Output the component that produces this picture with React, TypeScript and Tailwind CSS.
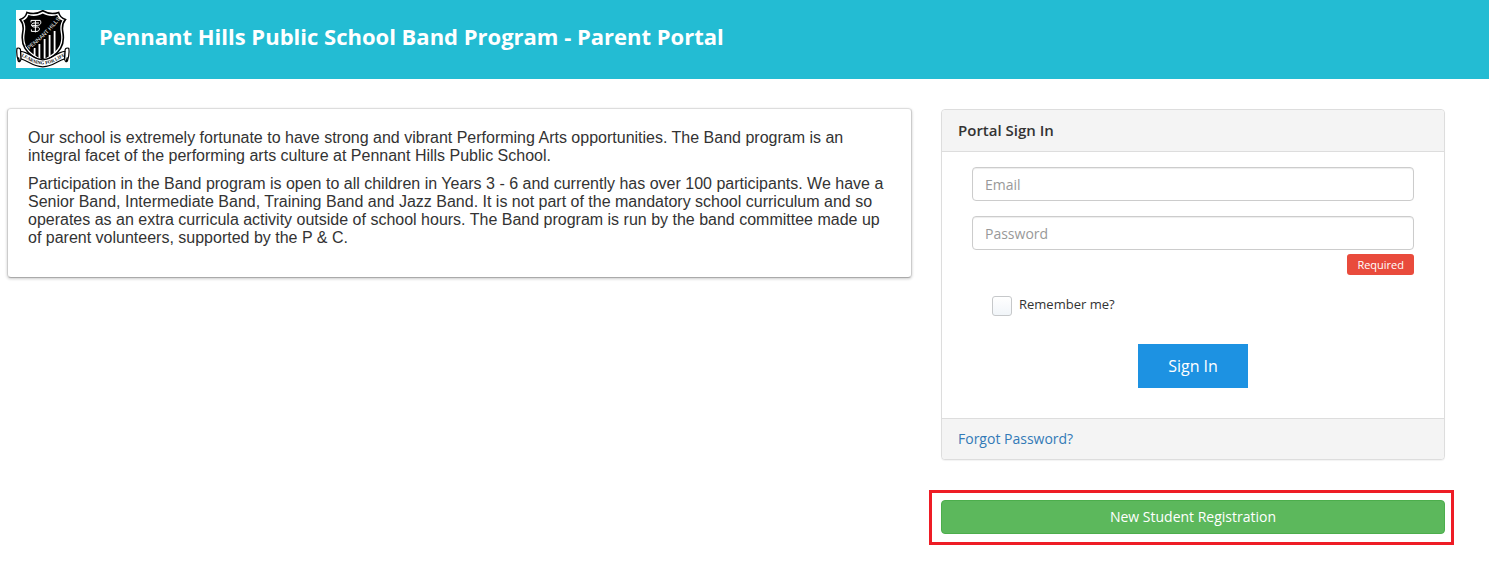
function SchoolCrest() {
  return (
    <svg
      viewBox="0 0 54 58"
      className="h-[58px] w-[54px] shrink-0"
      role="img"
      aria-label="Pennant Hills Public School crest"
    >
      <rect width="54" height="58" fill="#fff" />
      <path
        d="M11 2.4C17 4.6 22 3.6 26.8.8C31.6 3.6 36.6 4.6 42.6 2.4C43.6 6 46 8.4 49.4 9.6C46.4 13 45.8 17 46.9 22.5C48.9 34 45.4 43.5 26.8 52C8.2 43.5 4.7 34 6.7 22.5C7.8 17 7.2 13 4.2 9.6C7.6 8.4 10 6 11 2.4Z"
        fill="#fff"
        stroke="#000"
        strokeWidth="1.6"
      />
      <path
        d="M12.4 5C18 6.8 22.4 5.8 26.8 3.4C31.2 5.8 35.6 6.8 41.2 5C42.2 7.8 44 9.6 46.4 10.6C44.2 14 43.8 18 44.8 23C46.6 33.4 43.2 42 26.8 49.6C10.4 42 7 33.4 8.8 23C9.8 18 9.4 14 7.2 10.6C9.6 9.6 11.4 7.8 12.4 5Z"
        fill="#000"
      />
      <path
        d="M18.6 38V46M23.4 34V48M28.6 29V48.6M33.6 25V46.5M38.6 21V43"
        stroke="#fff"
        strokeWidth="1.8"
        fill="none"
      />
      <path
        d="M15 12.4V10.4H24.2C25.6 12.6 24.6 15.4 21.4 15.4H15.6M19.4 10.4V22.4M23 13H18C14.6 13.4 14.8 16.8 18 17H21.6C24.2 17.6 24 21 21 21.4H15.4V19.4"
        stroke="#fff"
        strokeWidth="1"
        fill="none"
      />
      <path d="M9.4 35.4L39.6 6.6L44.4 11.4L14.4 41.6Z" fill="#000" />
      <defs>
        <path id="crest-name" d="M13.2 39.4Q29.4 27.4 43.8 9.8" />
        <path id="crest-motto" d="M5.2 46.2C13 49.8 16.6 54.2 26.8 54.4C37 54.2 40.6 49.8 48.8 46.2" />
      </defs>
      <text
        fill="#fff"
        fontSize="5.6"
        fontFamily="'Liberation Sans', Arial, sans-serif"
      >
        <textPath href="#crest-name">PENNANT HILLS</textPath>
      </text>
      <path
        d="M1 38.4C3.4 37.2 4.8 39 4.6 41.4C13.6 42 17.4 49.8 26.8 49.8C36.2 49.8 40 42 49 41.4C48.8 39 50.2 37.2 52.8 38.4C53.4 42 53 46 51.6 50.2C50.8 52.6 49 52.2 48.6 48.8C42 50.4 37.2 56.6 26.8 56.8C16.4 56.6 11.6 50.4 5 48.8C4.6 52.2 2.8 52.6 2 50.2C.8 46 .4 42 1 38.4Z"
        fill="#fff"
        stroke="#000"
        strokeWidth="1.2"
      />
      <path
        d="M4.6 41.4L5 48.8M49 41.4L48.6 48.8M2.4 47.4L3.4 51.4M51.4 47.4L50.2 51.4"
        stroke="#000"
        strokeWidth="1.4"
        fill="none"
      />
      <text
        fill="#000"
        fontSize="4.6"
        fontWeight="700"
        fontFamily="'Liberation Serif', 'Times New Roman', serif"
      >
        <textPath href="#crest-motto">LEARNING FOR LIFE</textPath>
      </text>
    </svg>
  );
}

const fieldClass =
  "block h-[34px] w-full rounded border border-[#ccc] bg-white px-3 text-sm text-[#555] shadow-[inset_0_1px_1px_rgba(0,0,0,0.075)] outline-none placeholder:text-[#999] focus:border-[#66afe9]";

function SignInPanel() {
  return (
    <section className="rounded border border-[#ddd] bg-white shadow-[0_1px_1px_rgba(0,0,0,0.05)]">
      <h2 className="rounded-t border-b border-[#ddd] bg-[#f4f4f4] px-4 py-2.5 text-[15px]/[21px] font-semibold text-[#333]">
        Portal Sign In
      </h2>
      <form className="px-[30px] pt-[15px] pb-[30px]" onSubmit={(e) => e.preventDefault()}>
        <input type="email" aria-label="Email" placeholder="Email" className={fieldClass} />
        <input
          type="password"
          aria-label="Password"
          placeholder="Password"
          className={"mt-[15px] " + fieldClass}
        />
        <div className="mt-1 flex justify-end">
          <span className="rounded-[3px] bg-[#e94b3c] px-2.5 text-[11px]/[21px] text-white">
            Required
          </span>
        </div>
        <label className="mt-5 ml-5 flex w-fit items-start gap-[7px] text-[13px]/[18px] text-[#333]">
          <input
            type="checkbox"
            className="mt-px size-5 appearance-none rounded-[3px] border border-[#c6c8ca] bg-linear-to-b from-white to-[#f1f5f9] checked:bg-[#1d92e2]"
          />
          Remember me?
        </label>
        <div className="mt-7 flex justify-center">
          <button type="submit" className="h-11 bg-[#1d92e2] px-[30px] text-base text-white">
            Sign In
          </button>
        </div>
      </form>
      <div className="rounded-b border-t border-[#ddd] bg-[#f4f4f4] px-4 py-2.5 text-sm/[20px]">
        <a href="#forgot" className="text-[#337ab7] hover:underline">
          Forgot Password?
        </a>
      </div>
    </section>
  );
}

export default function App() {
  return (
    <div className="min-h-screen bg-white font-['Open_Sans',sans-serif] text-[#333]">
      <header className="flex items-start gap-[29px] bg-[#23bcd3] px-4 pt-2.5 pb-[11px]">
        <SchoolCrest />
        <h1 className="pt-3 text-[22px]/[28px] font-bold text-white">
          Pennant Hills Public School Band Program - Parent Portal
        </h1>
      </header>
      <main className="grid grid-cols-1 items-start gap-[29px] pt-[29px] pr-11 pl-[7px] md:grid-cols-[905fr_504fr]">
        <article className="space-y-2.5 rounded border border-[#ccc] border-t-[#ddd] border-b-[#aaa] px-5 pt-5 pb-[30px] font-['Liberation_Sans',Arial,sans-serif] text-base/[18px] shadow-[0_1px_3px_rgba(0,0,0,0.2)]">
          <p>
            Our school is extremely fortunate to have strong and vibrant Performing Arts
            opportunities. The Band program is an integral facet of the performing arts culture at
            Pennant Hills Public School.
          </p>
          <p>
            Participation in the Band program is open to all children in Years 3 - 6 and currently
            has over 100 participants. We have a Senior Band, Intermediate Band, Training Band and
            Jazz Band. It is not part of the mandatory school curriculum and so operates as an
            extra curricula activity outside of school hours. The Band program is run by the band
            committee made up of parent volunteers, supported by the P &amp; C.
          </p>
        </article>
        <aside className="pt-px">
          <SignInPanel />
          <div className="-mr-[9px] -ml-3 mt-[30px] border-3 border-[#ee1c25] pt-[7px] pr-1.5 pb-2 pl-[9px]">
            <button
              type="button"
              className="block h-[34px] w-full rounded border border-[#4cae4c] bg-[#5cb85c] text-sm text-white"
            >
              New Student Registration
            </button>
          </div>
        </aside>
      </main>
    </div>
  );
}
